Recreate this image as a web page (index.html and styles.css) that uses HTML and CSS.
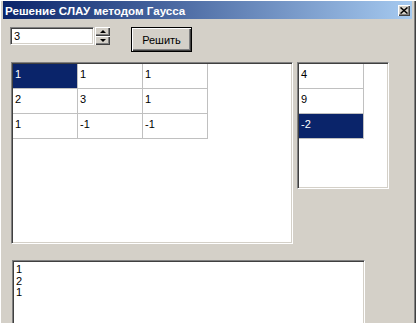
FILE: index.html
```html
<!DOCTYPE html>
<html lang="ru">
<head>
  <meta charset="UTF-8" />
  <title>Решение СЛАУ методом Гаусса</title>
  <link rel="stylesheet" href="styles.css">
</head>
<body>

  <div class="window">
    <div class="titlebar">
      <span class="title">Решение СЛАУ методом Гаусса</span>
      <span class="close-btn">
        <svg width="8" height="7" viewBox="0 0 8 7">
          <path d="M0.5 0.5 L7.5 6.5 M7.5 0.5 L0.5 6.5" stroke="#000" stroke-width="1.5" />
        </svg>
      </span>
    </div>

    <div class="client">
      <!-- Size input and solve button -->
      <div class="toolbar">
        <div class="spin-edit">
          <div class="edit">3</div>
          <div class="spin">
            <span class="spin-btn"><i class="arrow up"></i></span>
            <span class="spin-btn"><i class="arrow down"></i></span>
          </div>
        </div>
        <div class="button default">Решить</div>
      </div>

      <div class="grids">
        <!-- Matrix A -->
        <div class="grid-box matrix">
          <div class="cells cols-3">
            <div class="cell selected">1</div>
            <div class="cell">1</div>
            <div class="cell">1</div>
            <div class="cell">2</div>
            <div class="cell">3</div>
            <div class="cell">1</div>
            <div class="cell">1</div>
            <div class="cell">-1</div>
            <div class="cell">-1</div>
          </div>
        </div>

        <!-- Vector b -->
        <div class="grid-box vector">
          <div class="cells cols-1">
            <div class="cell">4</div>
            <div class="cell">9</div>
            <div class="cell selected">-2</div>
          </div>
        </div>
      </div>

      <!-- Result -->
      <div class="memo">1<br>2<br>1</div>
    </div>
  </div>

</body>
</html>
```

FILE: styles.css
```css
/* Base */
body {
  margin: 0;
  overflow: hidden;
  font-family: 'Liberation Sans', Arial, sans-serif;
  font-size: 11px;
  color: #000;
  background: #d4d0c8;
}

.window {
  width: 416px;
  height: 323px;
  box-sizing: border-box;
  padding: 1px 4px 0 3px;
  background: #d4d0c8;
  overflow: hidden;
  box-shadow: inset 1px 1px #fff, inset -1px 0 #404040, inset -2px 0 #808080;
}

/* Title bar */
.titlebar {
  height: 18px;
  display: flex;
  align-items: center;
  justify-content: space-between;
  padding: 0 2px 0 2px;
  background: linear-gradient(to right, #0a246a, #a6caf0);
}

.title {
  color: #fff;
  font-weight: bold;
  font-size: 11.6px;
}

.close-btn {
  width: 12px;
  height: 11px;
  box-sizing: border-box;
  display: flex;
  align-items: center;
  justify-content: center;
  background: #d4d0c8;
  box-shadow: inset 1px 1px #fff, inset -1px -1px #404040, inset -2px -2px #808080;
}

/* Client area */
.client {
  padding: 8px 0 0 7px;
}

.toolbar {
  display: flex;
  align-items: flex-start;
  gap: 21px;
}

.spin-edit {
  display: flex;
  gap: 1px;
}

.edit {
  width: 84px;
  height: 18px;
  box-sizing: border-box;
  padding: 2px 0 0 3px;
  background: #fff;
  border: 1px solid;
  border-color: #808080 #fff #fff #808080;
  box-shadow: inset 1px 1px #404040, inset -1px -1px #d4d0c8;
  line-height: 13px;
}

.spin {
  display: flex;
  flex-direction: column;
}

.spin-btn {
  width: 15px;
  height: 9px;
  box-sizing: border-box;
  display: flex;
  align-items: center;
  justify-content: center;
  background: #d4d0c8;
  box-shadow: inset 1px 1px #fff, inset -1px -1px #404040, inset -2px -2px #808080;
}

.arrow {
  width: 0;
  height: 0;
  border-left: 3px solid transparent;
  border-right: 3px solid transparent;
}

.arrow.up {
  border-bottom: 3px solid #000;
}

.arrow.down {
  border-top: 3px solid #000;
}

.button {
  width: 61px;
  height: 25px;
  box-sizing: border-box;
  display: flex;
  align-items: center;
  justify-content: center;
  background: #d4d0c8;
  box-shadow: inset 1px 1px #fff, inset -1px -1px #404040, inset -2px -2px #808080;
}

.button.default {
  border: 1px solid #000;
}

/* String grids */
.grids {
  display: flex;
  align-items: flex-start;
  gap: 4px;
  margin: 10px 0 0 1px;
}

.grid-box {
  box-sizing: border-box;
  background: #fff;
  border: 1px solid;
  border-color: #808080 #fff #fff #808080;
  box-shadow: inset 1px 1px #404040, inset -1px -1px #d4d0c8;
  padding: 1px 0 0 1px;
}

.matrix {
  width: 282px;
  height: 182px;
}

.vector {
  width: 92px;
  height: 127px;
}

.cells {
  display: grid;
}

.cols-3 {
  grid-template-columns: repeat(3, 65px);
}

.cols-1 {
  grid-template-columns: 65px;
}

.cell {
  height: 25px;
  box-sizing: border-box;
  padding: 4px 0 0 2px;
  border-right: 1px solid #c0c0c0;
  border-bottom: 1px solid #c0c0c0;
  line-height: 13px;
}

.cell.selected {
  background: #0a246a;
  color: #fff;
}

/* Result memo */
.memo {
  width: 353px;
  height: 80px;
  box-sizing: border-box;
  margin: 16px 0 0 2px;
  padding: 3px 0 0 3px;
  background: #fff;
  border: 1px solid;
  border-color: #808080 #fff #fff #808080;
  box-shadow: inset 1px 1px #404040, inset -1px -1px #d4d0c8;
  line-height: 11.7px;
}
```
